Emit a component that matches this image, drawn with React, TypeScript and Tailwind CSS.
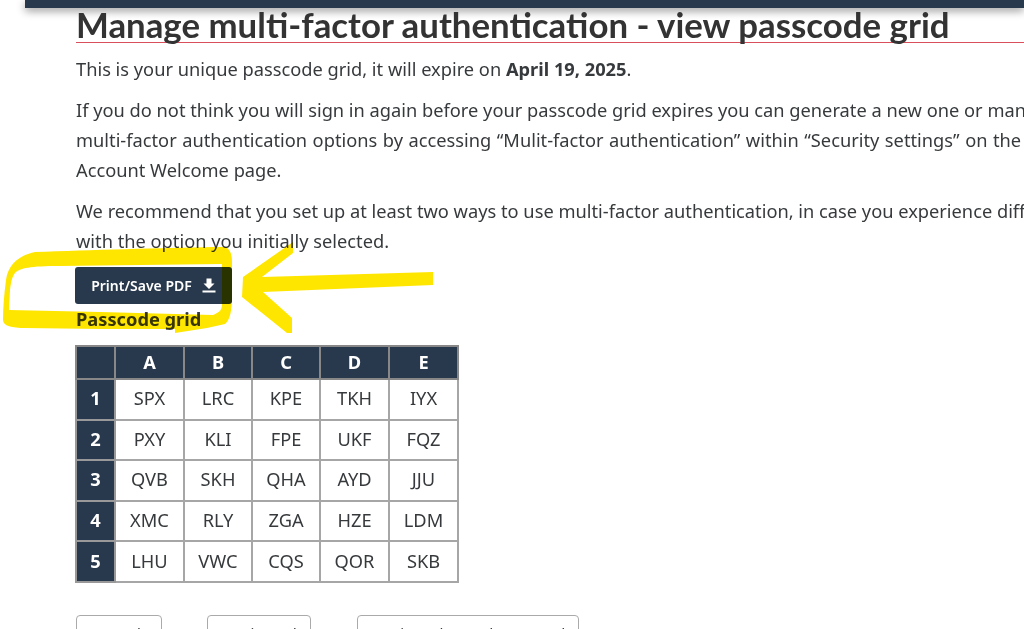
const header = ["", "A", "B", "C", "D", "E"];
const rows = [
  ["1", "SPX", "LRC", "KPE", "TKH", "IYX"],
  ["2", "PXY", "KLI", "FPE", "UKF", "FQZ"],
  ["3", "QVB", "SKH", "QHA", "AYD", "JJU"],
  ["4", "XMC", "RLY", "ZGA", "HZE", "LDM"],
  ["5", "LHU", "VWC", "CQS", "QOR", "SKB"],
];
const widths = ["w-[39px]", "w-[69px]", "w-[68px]", "w-[68px]", "w-[69px]", "w-[69px]"];

export default function App() {
  return (
    <div className="relative h-[629px] w-[1024px] overflow-hidden bg-white font-['Noto_Sans',sans-serif] text-[18.25px] leading-[30px] text-[#373a3c]">
      <div className="ml-[25px] h-[8px] bg-[#28384d] shadow-[0_3px_8px_rgba(0,0,0,0.4)]" />
      <div className="pl-[76px]">
        <h1 className="h-[35px] whitespace-nowrap border-b border-[#d9505c] font-['Lato',sans-serif] text-[34.8px] font-bold leading-[34px] text-[#333]">
          Manage multi-factor authentication - view passcode grid
        </h1>
        <p className="mt-[11px] whitespace-nowrap">
          This is your unique passcode grid, it will expire on <b>April 19, 2025</b>.
        </p>
        <p className="mt-[11px] whitespace-nowrap">
          If you do not think you will sign in again before your passcode grid expires you can generate a new one or manage your
          <br />
          <span className="[word-spacing:0.8px]">multi-factor authentication options by accessing “Mulit-factor authentication” within “Security settings” on the</span>
          <br />
          Account Welcome page.
        </p>
        <p className="mt-[11px] whitespace-nowrap">
          We recommend that you set up at least two ways to use multi-factor authentication, in case you experience difficulties
          <br />
          with the option you initially selected.
        </p>
        <button className="-ml-px mt-[11px] flex h-[37px] w-[157px] items-center justify-center gap-[10px] rounded-[3px] bg-[#28384d] text-[14px] font-semibold text-white">
          Print/Save PDF
          <svg width="14" height="15" viewBox="0 0 14 15" fill="white">
            <path d="M4.5 0.5h5v5h3l-5.5 5.5-5.5-5.5h3z" />
            <rect x="0.5" y="12.5" width="13" height="2" />
          </svg>
        </button>
        <h2 className="text-[18.25px] font-bold leading-[30px]">Passcode grid</h2>
        <table className="-ml-px mt-[11px] border-collapse border-2 border-[#999] text-center leading-[24px]">
          <thead>
            <tr className="h-[33px]">
              {header.map((h, i) => (
                <th key={i} className={`${widths[i]} border-2 border-[#888] bg-[#28384d] p-0 pb-[2px] font-bold text-white`}>
                  {h}
                </th>
              ))}
            </tr>
          </thead>
          <tbody>
            {rows.map((r) => (
              <tr key={r[0]} className="h-[40.6px]">
                {r.map((c, i) =>
                  i === 0 ? (
                    <th key={i} className="border-2 border-[#999] bg-[#28384d] p-0 pb-[2px] font-bold text-white">
                      {c}
                    </th>
                  ) : (
                    <td key={i} className="border-2 border-[#a6a6a6] p-0 pb-[2px]">
                      {c}
                    </td>
                  )
                )}
              </tr>
            ))}
          </tbody>
        </table>
        <div className="mt-[32px] flex text-[15px] leading-[24px]">
          <button className="flex h-[40px] w-[86px] items-start justify-center rounded-[4px] border border-[#aaa] pt-[5px]">← Back</button>
          <button className="ml-[45px] flex h-[40px] w-[104px] items-start justify-center rounded-[4px] border border-[#aaa] pt-[5px]">Retrieve Id</button>
          <button className="ml-[46px] flex h-[40px] w-[222px] items-start justify-center whitespace-nowrap rounded-[4px] border border-[#aaa] pt-[5px]">Retrieve changed password</button>
        </div>
      </div>
      <svg className="pointer-events-none absolute left-0 top-0 mix-blend-multiply" width="1024" height="629" fill="#ffe600">
        <path
          fillRule="evenodd"
          d="M6 280 C8 264 20 255 35 252 C90 250 160 248 213 247 L225 247 C230 249 232 254 232 262 L232 297 C232 310 230 320 225 324 L207 328 L175 333 L175 329 L100 329 L25 328 C12 328 3 326 3 320 C3 308 4 295 6 280 Z M222 264 L60 266 C30 266 20 268 15 273 C12 277 11 282 10 290 L9 310 L100 312 L213 315 C220 312 222 310 222 304 Z"
        />
        <path d="M433 272 L433 285 L263 292 L292 318 L292 333 L287 333 L242 297 L243 277 L293 242 L293 253 L262 277 Z" />
      </svg>
    </div>
  );
}
